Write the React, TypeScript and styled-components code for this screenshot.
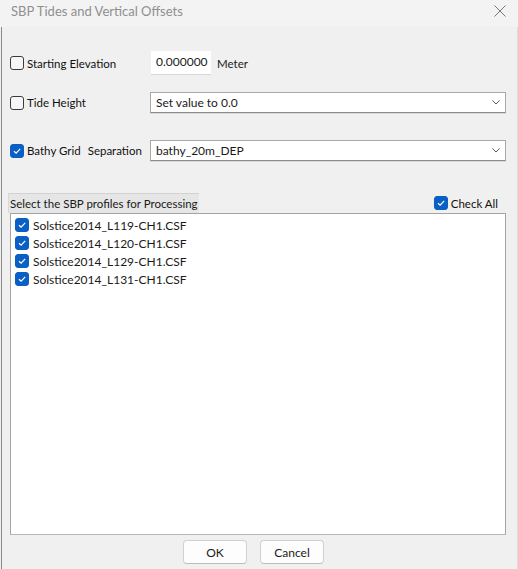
import React from "react";
import styled, { createGlobalStyle } from "styled-components";

const FONT = `Lato, "Noto Sans", sans-serif`;

const Global = createGlobalStyle`
  html, body { margin: 0; padding: 0; background: #f0f0f0; }
  body { font-family: ${FONT}; font-size: 12px; color: #1a1a1a; }
`;

const Window = styled.div`
  width: 518px;
  height: 569px;
  display: flex;
  flex-direction: column;
  background: #f0f0f0;
  box-sizing: border-box;
  overflow: hidden;
`;

const TitleBar = styled.div`
  height: 27px;
  flex: none;
  background: #f3f3f3;
  display: flex;
  align-items: flex-start;
  justify-content: space-between;
  padding: 3px 12px 0 11px;
  box-sizing: border-box;
`;

const Title = styled.span`
  font-size: 13px;
  line-height: 17px;
  color: #8f8f8f;
`;

const CloseIcon = styled.svg`
  margin-top: 2px;
  width: 12px;
  height: 12px;
`;

const Body = styled.div`
  flex: 1;
  display: flex;
  flex-direction: column;
  margin-left: 1px;
  border-left: 1px solid #8a8a8a;
  border-right: 1px solid #dcdcdc;
  padding: 24px 11px 5px 8px;
  min-height: 0;
`;

const FormRow = styled.div<{ $top: number; $h: number }>`
  display: grid;
  grid-template-columns: 140px 1fr;
  align-items: center;
  height: ${(p) => p.$h}px;
  margin-top: ${(p) => p.$top}px;
`;

const CheckLabel = styled.label`
  display: flex;
  align-items: center;
  gap: 3px;
  font-size: 11.5px;
  white-space: nowrap;
  color: #111;
`;

const Box = styled.span<{ $on?: boolean }>`
  width: 14px;
  height: 14px;
  flex: none;
  box-sizing: border-box;
  border-radius: 3px;
  border: 1px solid ${(p) => (p.$on ? "#0a5fc4" : "#3c3c3c")};
  background: ${(p) => (p.$on ? "#0a5fc4" : "#f7f7f7")};
  display: inline-flex;
  align-items: center;
  justify-content: center;
`;

const Gap = styled.span`
  display: inline-block;
  width: 1px;
`;

const ValueRow = styled.div`
  display: flex;
  align-items: center;
  height: 100%;
`;

const NumInput = styled.div`
  width: 60px;
  height: 24px;
  margin-left: 1px;
  box-sizing: border-box;
  background: #ffffff;
  border-bottom: 1px solid #d6d6d6;
  padding: 2px 0 0 5px;
  font-size: 12px;
  line-height: 17px;
`;

const Unit = styled.span`
  margin-left: 6px;
  white-space: nowrap;
  font-size: 11.5px;
`;

const Select = styled.div`
  height: 21px;
  box-sizing: border-box;
  background: #ffffff;
  border: 1px solid #a8a8a8;
  border-bottom-color: #8c8c8c;
  display: flex;
  align-items: center;
  justify-content: space-between;
  padding: 0 5px 0 5px;
  font-size: 12px;
  box-shadow: 0 1px 0 #dadada;
`;

const Chevron = styled.svg`
  width: 8px;
  height: 5px;
`;

const ListHeader = styled.div`
  display: flex;
  align-items: center;
  justify-content: space-between;
  height: 20px;
  margin-top: 32px;
  margin-left: -2px;
`;

const HeaderLabel = styled.div`
  height: 20px;
  box-sizing: border-box;
  background: #e6e6e6;
  border-top: 1px solid #d2d2d2;
  border-left: 1px solid #d8d8d8;
  padding: 1px 1px 0 1px;
  font-size: 11.5px;
  line-height: 17px;
  white-space: nowrap;
`;

const CheckAll = styled(CheckLabel)`
  margin-right: 8px;
`;

const List = styled.div`
  flex: 1;
  background: #ffffff;
  border: 1px solid #a3a3a8;
  border-bottom-color: #b8b8bc;
  box-sizing: border-box;
  padding: 2px 0 0 4px;
  display: flex;
  flex-direction: column;
`;

const Item = styled.div`
  display: flex;
  align-items: center;
  gap: 4px;
  height: 18px;
  font-size: 12px;
  white-space: nowrap;
`;

const Buttons = styled.div`
  display: flex;
  justify-content: center;
  gap: 13px;
  margin-top: 5px;
  padding-right: 9px;
`;

const Button = styled.button`
  width: 64px;
  height: 24px;
  box-sizing: border-box;
  background: #fdfdfd;
  border: 1px solid #d0d0d0;
  border-bottom-color: #bdbdbd;
  border-radius: 4px;
  font-family: ${FONT};
  font-size: 12px;
  color: #1a1a1a;
  padding: 0;
`;

const Check = () => (
  <svg width="10" height="10" viewBox="0 0 10 10">
    <path d="M2 5.2 L4.1 7.2 L8.2 2.8" fill="none" stroke="#ffffff" strokeWidth="1.2" />
  </svg>
);

const CheckBox = ({ on }: { on?: boolean }) => <Box $on={on}>{on && <Check />}</Box>;

const ChevronDown = () => (
  <Chevron viewBox="0 0 8 5">
    <path d="M0.5 0.5 L4 4 L7.5 0.5" fill="none" stroke="#555" strokeWidth="1" />
  </Chevron>
);

const files = [
  "Solstice2014_L119-CH1.CSF",
  "Solstice2014_L120-CH1.CSF",
  "Solstice2014_L129-CH1.CSF",
  "Solstice2014_L131-CH1.CSF",
];

export default function App() {
  return (
    <>
      <Global />
      <Window>
        <TitleBar>
          <Title>SBP Tides and Vertical Offsets</Title>
          <CloseIcon viewBox="0 0 12 12">
            <path d="M0.5 0.5 L11.5 11.5 M11.5 0.5 L0.5 11.5" stroke="#777" strokeWidth="1" />
          </CloseIcon>
        </TitleBar>
        <Body>
          <FormRow $top={0} $h={24}>
            <CheckLabel>
              <CheckBox />
              Starting Elevation
            </CheckLabel>
            <ValueRow>
              <NumInput>0.000000</NumInput>
              <Unit>Meter</Unit>
            </ValueRow>
          </FormRow>
          <FormRow $top={17} $h={21}>
            <CheckLabel>
              <CheckBox />
              Tide Height
            </CheckLabel>
            <Select>
              Set value to 0.0
              <ChevronDown />
            </Select>
          </FormRow>
          <FormRow $top={27} $h={21}>
            <CheckLabel>
              <CheckBox on />
              Bathy Grid
              <Gap />
              Separation
            </CheckLabel>
            <Select>
              bathy_20m_DEP
              <ChevronDown />
            </Select>
          </FormRow>
          <ListHeader>
            <HeaderLabel>Select the SBP profiles for Processing</HeaderLabel>
            <CheckAll>
              <CheckBox on />
              Check All
            </CheckAll>
          </ListHeader>
          <List>
            {files.map((f) => (
              <Item key={f}>
                <CheckBox on />
                {f}
              </Item>
            ))}
          </List>
          <Buttons>
            <Button>OK</Button>
            <Button>Cancel</Button>
          </Buttons>
        </Body>
      </Window>
    </>
  );
}
